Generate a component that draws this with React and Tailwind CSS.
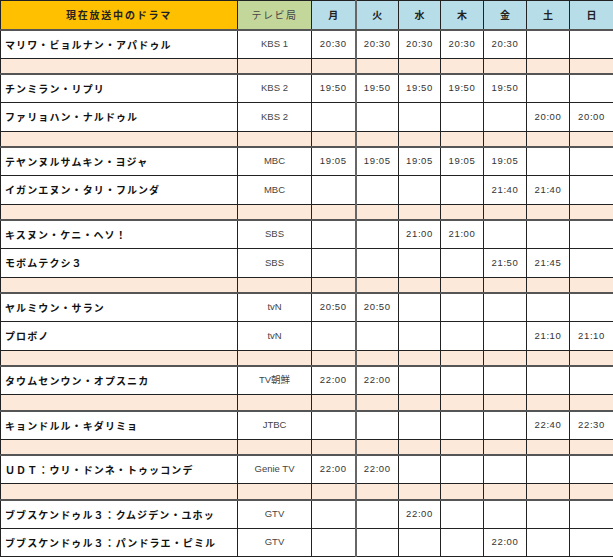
import React from "react";

const days = ["月", "火", "水", "木", "金", "土", "日"];

// null = spacer row
const rows = [
  { name: "マリワ・ビョルナン・アパドゥル", tv: "KBS 1", t: ["20:30", "20:30", "20:30", "20:30", "20:30", "", ""] },
  null,
  { name: "チンミラン・リプリ", tv: "KBS 2", t: ["19:50", "19:50", "19:50", "19:50", "19:50", "", ""] },
  { name: "ファリョハン・ナルドゥル", tv: "KBS 2", t: ["", "", "", "", "", "20:00", "20:00"] },
  null,
  { name: "テヤンヌルサムキン・ヨジャ", tv: "MBC", t: ["19:05", "19:05", "19:05", "19:05", "19:05", "", ""] },
  { name: "イガンエヌン・タリ・フルンダ", tv: "MBC", t: ["", "", "", "", "21:40", "21:40", ""] },
  null,
  { name: "キスヌン・ケニ・ヘソ！", tv: "SBS", t: ["", "", "21:00", "21:00", "", "", ""] },
  { name: "モボムテクシ３", tv: "SBS", t: ["", "", "", "", "21:50", "21:45", ""] },
  null,
  { name: "ヤルミウン・サラン", tv: "tvN", t: ["20:50", "20:50", "", "", "", "", ""] },
  { name: "プロボノ", tv: "tvN", t: ["", "", "", "", "", "21:10", "21:10"] },
  null,
  { name: "タウムセンウン・オプスニカ", tv: "TV朝鮮", t: ["22:00", "22:00", "", "", "", "", ""] },
  null,
  { name: "キョンドルル・キダリミョ", tv: "JTBC", t: ["", "", "", "", "", "22:40", "22:30"] },
  null,
  { name: "ＵＤＴ：ウリ・ドンネ・トゥッコンデ", tv: "Genie TV", t: ["22:00", "22:00", "", "", "", "", ""] },
  null,
  { name: "ブブスケンドゥル３：クムジデン・ユホッ", tv: "GTV", t: ["", "", "22:00", "", "", "", ""] },
  { name: "ブブスケンドゥル３：パンドラエ・ピミル", tv: "GTV", t: ["", "", "", "", "22:00", "", ""] },
];

const jp = "font-['Noto_Sans_CJK_JP',sans-serif]";
const sans = "font-['Liberation_Sans','Noto_Sans_CJK_JP',sans-serif]";

function dayBorder(i) {
  return i === 1 ? "border-l-2 border-l-[#666]" : "";
}

export default function App() {
  return (
    <div className="w-[613px] h-[558px] bg-white overflow-hidden">
      <table className="table-fixed border-collapse w-[613px]">
        <colgroup>
          <col className="w-[237px]" />
          <col className="w-[74px]" />
          <col className="w-[44px]" />
          <col className="w-[43px]" />
          <col className="w-[42px]" />
          <col className="w-[43px]" />
          <col className="w-[43px]" />
          <col className="w-[43px]" />
          <col className="w-[44px]" />
        </colgroup>
        <thead>
          <tr className="h-[29px]">
            <th className={`bg-[#ffc000] border border-[#222] border-b-2 border-b-[#555] text-[10px] font-bold tracking-[1.8px] text-[#222] ${jp}`}>
              現在放送中のドラマ
            </th>
            <th className={`bg-[#c4d79b] border border-[#222] border-b-2 border-b-[#555] text-[10px] font-normal tracking-[1.5px] text-[#444] ${jp}`}>
              テレビ局
            </th>
            {days.map((d, i) => (
              <th
                key={d}
                className={`bg-[#b7dde8] border border-[#222] border-b-2 border-b-[#555] text-[10px] font-bold text-[#222] ${jp} ${dayBorder(i)}`}
              >
                {d}
              </th>
            ))}
          </tr>
        </thead>
        <tbody>
          {rows.map((r, idx) => {
            const afterSpacer = idx > 0 && rows[idx - 1] === null;
            const top = afterSpacer ? "border-t-2 border-t-[#555]" : "";
            if (r === null) {
              return (
                <tr key={idx} className="h-[16px] bg-[#fde9d9]">
                  <td className="border border-[#222]" />
                  <td className="border border-[#222]" />
                  {days.map((d, i) => (
                    <td key={d} className={`border border-[#222] ${dayBorder(i)}`} />
                  ))}
                </tr>
              );
            }
            return (
              <tr key={idx} className="h-[28.5px]">
                <td className={`border border-[#222] ${top} pl-[4px] text-[10px] font-bold tracking-[1.1px] text-[#111] whitespace-nowrap ${jp}`}>
                  {r.name}
                </td>
                <td className={`border border-[#222] ${top} text-center text-[9.5px] text-[#444] ${sans}`}>
                  {r.tv}
                </td>
                {r.t.map((v, i) => (
                  <td
                    key={i}
                    className={`border border-[#222] ${top} ${dayBorder(i)} text-center text-[9.5px] tracking-[0.6px] text-[#333] ${sans}`}
                  >
                    {v}
                  </td>
                ))}
              </tr>
            );
          })}
        </tbody>
      </table>
    </div>
  );
}
